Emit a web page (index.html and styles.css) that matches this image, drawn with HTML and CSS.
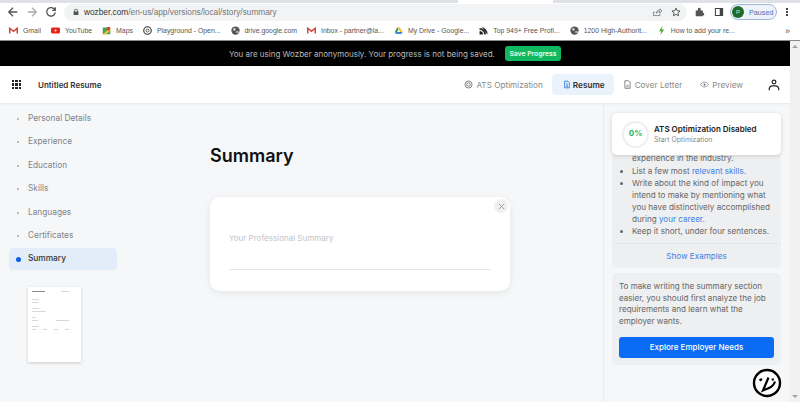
FILE: index.html
```html
<!DOCTYPE html>
<html lang="en">
<head>
  <meta charset="UTF-8" />
  <title>Wozber - Summary</title>
  <link rel="stylesheet" href="styles.css">
</head>
<body>
  <div class="tabstrip"><div class="tab-edge"></div></div>

  <div class="toolbar">
    <svg class="nav-icon" viewBox="0 0 14 14"><path d="M12 7H2.5M7 2 2 7l5 5" fill="none" stroke="#555" stroke-width="1.5"/></svg>
    <svg class="nav-icon" viewBox="0 0 14 14"><path d="M2 7h9.5M7 2l5 5-5 5" fill="none" stroke="#aaa" stroke-width="1.5"/></svg>
    <svg class="nav-icon" viewBox="0 0 14 14"><path d="M11.5 4.5A5 5 0 1 0 12 7.5M12 1.5v3.6H8.4" fill="none" stroke="#555" stroke-width="1.5"/></svg>
    <div class="omnibox">
      <svg class="lock" viewBox="0 0 10 12"><path d="M2 5V3.5a3 3 0 0 1 6 0V5h1v6H1V5zm1.3 0h3.4V3.5a1.7 1.7 0 0 0-3.4 0z" fill="#555"/></svg>
      <span class="url"><b>wozber.com</b>/en-us/app/versions/local/story/summary</span>
      <svg class="omni-icon" viewBox="0 0 14 14"><path d="M2 12V7h2M2 12h9V9M6 9c0-3 2-4.5 5-4.5v-2l3 3-3 3v-2C9 6.500 7 7 6 9z" fill="none" stroke="#666" stroke-width="1"/></svg>
      <svg class="omni-icon" viewBox="0 0 14 14"><path d="m7 1.5 1.700 3.700 4 .4-3 2.700.9 4L7 10.300l-3.600 2 .9-4-3-2.700 4-.4z" fill="none" stroke="#444" stroke-width="1.2"/></svg>
    </div>
    <svg class="tool-icon" viewBox="0 0 14 14"><path d="M1 5h3V3a2 2 0 0 1 4 0v2h3v3a2 2 0 0 1 0 4v1H1z" fill="#555"/></svg>
    <svg class="tool-icon" viewBox="0 0 14 14"><path d="M2 2h10v10H2z" fill="none" stroke="#444" stroke-width="1.5"/><path d="M8 2h4v10H8z" fill="#444"/></svg>
    <div class="profile"><span class="avatar">P</span><span class="paused">Paused</span></div>
    <div class="kebab"><i></i><i></i><i></i></div>
  </div>

  <div class="bookmarks">
    <span class="mark"><svg viewBox="0 0 12 12"><path d="M1 10V3l5 4 5-4v7" fill="none" stroke="#d5453a" stroke-width="2"/></svg>Gmail</span>
    <span class="mark"><svg viewBox="0 0 12 12"><rect y="2" width="12" height="8" rx="2" fill="#e8211c"/><path d="m5 4.300 3 1.700-3 1.700z" fill="#fff"/></svg>YouTube</span>
    <span class="mark"><svg viewBox="0 0 12 12"><path d="M1 2h10v9H1z" fill="#3da35a"/><path d="M1 11 11 2v4l-5 5z" fill="#f1c232"/><circle cx="8.5" cy="3.5" r="2.5" fill="#d9412f"/></svg>Maps</span>
    <span class="mark"><svg viewBox="0 0 12 12"><circle cx="6" cy="6" r="5" fill="none" stroke="#333" stroke-width="1.5"/><circle cx="6" cy="6" r="2" fill="none" stroke="#333"/></svg>Playground - Open...</span>
    <span class="mark"><svg viewBox="0 0 12 12"><circle cx="6" cy="6" r="5.5" fill="#555"/><path d="M3 3h3v3H3zM7 7h3v2H7z" fill="#ddd"/></svg>drive.google.com</span>
    <span class="mark"><svg viewBox="0 0 12 12"><path d="M1 10V3l5 4 5-4v7" fill="none" stroke="#d5453a" stroke-width="2"/></svg>Inbox - partner@la...</span>
    <span class="mark"><svg viewBox="0 0 12 12"><path d="M4.500 1.500h3L11.500 8H8.500z" fill="#f5c131"/><path d="M4.500 1.500 1 8l1.500 2.500L6 4.500z" fill="#2aa05a"/><path d="M2.500 10.500h7L11.500 8H4z" fill="#3f7fe8"/></svg>My Drive - Google...</span>
    <span class="mark"><svg viewBox="0 0 12 12"><path d="M1 11V7a4 4 0 0 1 4 4zM1 5a6 6 0 0 1 6 6h2A8 8 0 0 0 1 3zM4 1.500a9 9 0 0 1 7 9.500" fill="#222" stroke="#222" stroke-width=".5"/></svg>Top 949+ Free Profi...</span>
    <span class="mark"><svg viewBox="0 0 12 12"><circle cx="6" cy="6" r="5.5" fill="#555"/><path d="M3 3h3v3H3zM7 7h3v2H7z" fill="#ddd"/></svg>1200 High-Authorit...</span>
    <span class="mark"><svg viewBox="0 0 12 12"><path d="M7.500 0 2.500 7h3l-1 5 5-7.500h-3z" fill="#4caf2f"/></svg>How to add your re...</span>
    <span class="more">&raquo;</span>
  </div>

  <div class="page">
    <div class="app">
      <div class="notice">
        <span>You are using Wozber anonymously. Your progress is not being saved.</span>
        <span class="save-btn">Save Progress</span>
      </div>

      <header class="topbar">
        <div class="grid-icon"><i></i><i></i><i></i><i></i><i></i><i></i><i></i><i></i><i></i></div>
        <span class="doc-title">Untitled Resume</span>
        <nav class="tabs">
          <span class="tab">
            <svg viewBox="0 0 12 12"><circle cx="6" cy="6" r="4.7" fill="none" stroke="#777" stroke-width="1.2"/><circle cx="6" cy="6" r="2.3" fill="none" stroke="#777" stroke-width="1.2"/></svg>
            ATS Optimization</span>
          <span class="tab tab-active">
            <svg viewBox="0 0 12 12"><path d="M2.500 1h5l2 2v8h-7z" fill="none" stroke="#1f6fd8" stroke-width="1.2"/><path d="M4.500 5h3M4.500 7h3M4.500 9h3" stroke="#1f6fd8"/></svg>
            Resume</span>
          <span class="tab">
            <svg viewBox="0 0 12 12"><path d="M2.500 1h5l2 2v8h-7z" fill="none" stroke="#777" stroke-width="1.2"/><path d="M4.500 7h3M4.500 9h3" stroke="#777"/></svg>
            Cover Letter</span>
          <span class="tab">
            <svg viewBox="0 0 12 12"><path d="M.8 6C2.200 3.700 4 2.800 6 2.800s3.800.9 5.200 3.200C9.800 8.300 8 9.200 6 9.200S2.200 8.300.8 6z" fill="none" stroke="#777"/><circle cx="6" cy="6" r="1.5" fill="#777"/></svg>
            Preview</span>
        </nav>
        <svg class="user-icon" viewBox="0 0 14 14"><circle cx="7" cy="3.500" r="2.200" fill="none" stroke="#222" stroke-width="1.4"/><path d="M1.500 13v-1.500A3.500 3.500 0 0 1 5 8h4a3.500 3.500 0 0 1 3.500 3.500V13" fill="none" stroke="#222" stroke-width="1.4"/></svg>
      </header>

      <div class="workspace">
        <aside class="steps">
          <ul class="step-list">
            <li class="step">Personal Details</li>
            <li class="step">Experience</li>
            <li class="step">Education</li>
            <li class="step">Skills</li>
            <li class="step">Languages</li>
            <li class="step">Certificates</li>
            <li class="step step-active">Summary</li>
          </ul>
          <div class="thumb">
            <div class="thumb-row thumb-top"><i class="w13 dark"></i><i class="w8"></i></div>
            <div class="thumb-row"><i class="w7"></i></div>
            <div class="thumb-row gap-s"><i class="w6"></i></div>
            <div class="thumb-row"><i class="w7"></i></div>
            <div class="thumb-row gap-s"><i class="w14"></i></div>
            <div class="thumb-row"><i class="w4"></i></div>
            <div class="thumb-row gap-s"><i class="w6"></i><i class="w13"></i></div>
            <div class="thumb-row"><i class="w7"></i></div>
            <div class="thumb-row gap-s"><i class="w4"></i><i class="w4"></i><i class="w4"></i><i class="w4"></i></div>
          </div>
        </aside>

        <main class="editor">
          <h1 class="editor-title">Summary</h1>
          <div class="card">
            <span class="close-btn">
              <svg viewBox="0 0 8 8"><path d="m1 1 6 6M7 1 1 7" stroke="#999" stroke-width="1"/></svg>
            </span>
            <div class="field">Your Professional Summary</div>
          </div>
        </main>

        <aside class="tips">
          <div class="ats-card">
            <span class="ring">0%</span>
            <div>
              <div class="ats-title">ATS Optimization Disabled</div>
              <div class="ats-sub">Start Optimization</div>
            </div>
          </div>
          <div class="tip-box">
            <ul class="tip-list">
              <li class="tip-cut">experience in the industry.</li>
              <li>List a few most <a>relevant skills.</a></li>
              <li>Write about the kind of impact you intend to make by mentioning what you have distinctively accomplished during <a>your career.</a></li>
              <li>Keep it short, under four sentences.</li>
            </ul>
            <div class="show-examples">Show Examples</div>
          </div>
          <div class="tip-box employer">
            <p>To make writing the summary section easier, you should first analyze the job requirements and learn what the employer wants.</p>
            <div class="explore-btn">Explore Employer Needs</div>
          </div>
          <svg class="logo" viewBox="0 0 30 30">
            <circle cx="15" cy="15" r="13" fill="#fff" stroke="#000" stroke-width="2.4"/>
            <path d="M7.500 12.500 10 11M16.500 9.500 11 22.500l6-2.500c3-1.300 5-3.500 6-6.500M20.500 10.500l.5 2" fill="none" stroke="#000" stroke-width="2.2"/>
          </svg>
        </aside>
      </div>
    </div>
    <div class="scrollbar"></div>
  </div>
</body>
</html>
```

FILE: styles.css
```css
* {
  box-sizing: border-box;
}

html, body {
  height: 402px;
  overflow: hidden;
}

body {
  margin: 0;
  font-family: Inter, "Liberation Sans", sans-serif;
  background: #f6f7f9;
  color: #333;
}

/* browser chrome */
.tabstrip {
  height: 3px;
  background: #dee1e6;
}

.tab-edge {
  margin-left: 458px;
  width: 95px;
  height: 3px;
  background: #fff;
}

.toolbar {
  height: 18px;
  background: #fff;
  display: flex;
  align-items: center;
  padding-left: 7px;
}

.nav-icon {
  width: 12px;
  height: 12px;
  margin-right: 7px;
}

.omnibox {
  flex: 0 0 623px;
  height: 17px;
  background: #f1f3f4;
  border-radius: 9px;
  display: flex;
  align-items: center;
  padding: 0 6px 0 9px;
}

.lock {
  width: 6px;
  height: 8px;
  margin-right: 5px;
}

.url {
  font-family: "Liberation Sans", sans-serif;
  font-size: 8.3px;
  color: #777;
  flex: 1;
}

.url b {
  font-weight: 400;
  color: #333;
}

.omni-icon {
  width: 10px;
  height: 10px;
  margin-left: 9px;
}

.tool-icon {
  width: 10px;
  height: 10px;
  margin-left: 8px;
}

.tool-icon + .tool-icon {
  margin-left: 9px;
}

.profile {
  margin-left: 6px;
  width: 47px;
  height: 16px;
  border: 1px solid #9db9d9;
  border-radius: 8px;
  display: flex;
  align-items: center;
  background: #eef3fb;
}

.avatar {
  width: 12px;
  height: 12px;
  margin-left: 1px;
  border-radius: 50%;
  background: #1e6b2c;
  color: #cfe3c9;
  font: 6px "Liberation Sans", sans-serif;
  text-align: center;
  line-height: 12px;
}

.paused {
  font: 7.2px "Liberation Sans", sans-serif;
  color: #4a6fb5;
  margin-left: 5px;
}

.kebab {
  margin-left: 9px;
  display: flex;
  flex-direction: column;
  gap: 1px;
}

.kebab i {
  width: 2px;
  height: 2px;
  background: #444;
}

.bookmarks {
  height: 20px;
  background: #fff;
  border-bottom: 1px solid #8a8a8a;
  display: flex;
  align-items: center;
  padding-left: 9px;
  font: 6.9px "Liberation Sans", sans-serif;
  color: #555;
  white-space: nowrap;
}

.mark {
  display: flex;
  align-items: center;
  gap: 5px;
  margin-right: 10px;
}

.mark svg {
  width: 9px;
  height: 9px;
}

.more {
  margin-left: auto;
  margin-right: 10px;
  font-size: 9px;
}

/* page area */
.page {
  display: flex;
  height: 361px;
}

.app {
  flex: 1;
  min-width: 0;
  display: flex;
  flex-direction: column;
}

.scrollbar {
  width: 10px;
  background: #f1f1f1;
  display: flex;
  flex-direction: column;
  justify-content: space-between;
  align-items: center;
  padding: 4px 0;
}

.scrollbar::before {
  content: "";
  border: 3px solid transparent;
  border-top: 0;
  border-bottom: 3px solid #a3a3a3;
}

.scrollbar::after {
  content: "";
  border: 3px solid transparent;
  border-bottom: 0;
  border-top: 3px solid #a3a3a3;
}

.notice {
  height: 25px;
  background: #000;
  color: #bbb;
  font-size: 8px;
  display: flex;
  align-items: center;
  justify-content: center;
  gap: 10px;
}

.save-btn {
  background: #10b860;
  color: #e8fff0;
  font-size: 6.8px;
  font-weight: 600;
  height: 15px;
  line-height: 15px;
  padding: 0 4.5px;
  border-radius: 3px;
}

.topbar {
  height: 37px;
  background: #fff;
  box-shadow: 0 1px 2px rgba(0, 0, 0, .07);
  display: flex;
  align-items: center;
  padding-left: 12px;
}

.grid-icon {
  display: grid;
  grid-template-columns: repeat(3, 2.4px);
  gap: 1px;
  width: 10px;
}

.grid-icon i {
  height: 2.4px;
  background: #222;
}

.doc-title {
  font-size: 8px;
  font-weight: 600;
  color: #333;
  margin-left: 16px;
}

.tabs {
  display: flex;
  align-items: center;
  margin-left: auto;
  font-size: 8.2px;
  color: #8a8a8a;
}

.tab {
  display: flex;
  align-items: center;
  gap: 3px;
  height: 21px;
  padding: 0 9px;
}

.tab svg {
  width: 9px;
  height: 9px;
}

.tab-active {
  background: #eaf2fc;
  color: #333;
  font-weight: 600;
  border-radius: 4px;
  gap: 2px;
  padding: 0 9px 0 11px;
}

.tab-active svg {
  width: 8px;
}

.user-icon {
  width: 12px;
  height: 12px;
  margin: 0 10px 0 16px;
}

.workspace {
  flex: 1;
  display: flex;
  min-height: 0;
}

/* left steps */
.steps {
  width: 203px;
  padding: 5px 0 0 9px;
}

.step-list {
  list-style: none;
  margin: 0;
  padding: 0;
  width: 108px;
}

.step {
  height: 21.4px;
  margin-bottom: 2px;
  padding-left: 19px;
  line-height: 21.4px;
  font-size: 8.3px;
  color: #808488;
  position: relative;
  border-radius: 4px;
}

.step::before {
  content: "";
  position: absolute;
  left: 8px;
  top: 10px;
  width: 2px;
  height: 2px;
  border-radius: 50%;
  background: #aaa;
}

.step-active {
  background: #e3edf9;
  color: #333;
  font-weight: 500;
}

.step-active::before {
  left: 7px;
  top: 8.5px;
  width: 5px;
  height: 5px;
  background: #0f5fe0;
}

.thumb {
  width: 53px;
  height: 75px;
  margin: 17px 0 0 19px;
  background: #fff;
  box-shadow: 0 1px 3px rgba(0, 0, 0, .18);
  padding: 4px 4px;
}

.thumb-row {
  display: flex;
  justify-content: space-between;
  margin-top: 5px;
  padding-right: 8px;
}

.thumb-row.gap-s {
  margin-top: 2px;
}

.thumb-top {
  margin-top: 0;
  margin-bottom: 7px;
}

.thumb-row i {
  height: 1px;
  background: #d8d8d8;
}

.thumb-row .dark {
  background: #8a8a8a;
}

.w4 { width: 4px; }
.w6 { width: 6px; }
.w7 { width: 7px; }
.w8 { width: 8px; }
.w13 { width: 13px; }
.w14 { width: 14px; }

/* middle editor */
.editor {
  width: 400px;
  padding: 0 0 0 6px;
}

.editor-title {
  margin: 42px 0 0 1px;
  font-size: 18px;
  font-weight: 600;
  line-height: 22px;
  color: #111;
}

.card {
  position: relative;
  width: 300px;
  height: 94px;
  margin: 30px 0 0 1px;
  padding: 36px 19px 0;
  background: #fff;
  border-radius: 10px;
  box-shadow: 0 2px 8px rgba(0, 0, 0, .07);
}

.close-btn {
  position: absolute;
  top: 2px;
  right: 2px;
  width: 14px;
  height: 14px;
  border-radius: 50%;
  background: #f0f0f0;
  display: flex;
  align-items: center;
  justify-content: center;
}

.close-btn svg {
  width: 7px;
  height: 7px;
}

.field {
  height: 37px;
  font-size: 8px;
  line-height: 10px;
  color: #c4c4c4;
  border-bottom: 1px solid #e5e5e5;
}

/* right tips */
.tips {
  flex: 1;
  position: relative;
  border-left: 1px solid #ececec;
  padding: 50px 9px 0 8px;
  font-size: 8.1px;
  line-height: 11.9px;
  color: #666;
}

.ats-card {
  position: absolute;
  top: 10px;
  left: 8px;
  right: 9px;
  height: 42px;
  background: #fff;
  border-radius: 5px;
  box-shadow: 0 1px 4px rgba(0, 0, 0, .15);
  display: flex;
  align-items: center;
  gap: 5px;
  padding-left: 10px;
  z-index: 1;
}

.ring {
  width: 27px;
  height: 27px;
  border-radius: 50%;
  border: 2.5px solid #eee;
  color: #1eb468;
  font-size: 8px;
  font-weight: 700;
  display: flex;
  align-items: center;
  justify-content: center;
}

.ats-title {
  font-size: 8px;
  line-height: 11px;
  font-weight: 600;
  color: #222;
  white-space: nowrap;
}

.ats-sub {
  font-size: 6.9px;
  line-height: 10px;
  color: #888;
}

.tip-box {
  background: #eeeff1;
  border-radius: 5px;
}

.tip-list {
  margin: 0;
  padding: 0 5px 5px 20px;
}

.tip-list li + li {
  margin-top: .6px;
}

.tip-cut {
  list-style: none;
}

.tip-list a, .show-examples {
  color: #3b82e6;
}

.show-examples {
  border-top: 1px solid #e6e7e9;
  height: 25px;
  line-height: 25px;
  text-align: center;
}

.employer {
  margin-top: 5px;
  padding: 8px 7px;
  height: 92px;
  line-height: 11.6px;
}

.employer p {
  margin: 0 0 9.6px;
}

.explore-btn {
  height: 21px;
  line-height: 21px;
  background: #0a6cf5;
  color: #fff;
  border-radius: 3px;
  text-align: center;
  font-size: 8px;
  font-weight: 500;
}

.logo {
  position: absolute;
  left: 148px;
  top: 265px;
  width: 30px;
  height: 30px;
}
```
